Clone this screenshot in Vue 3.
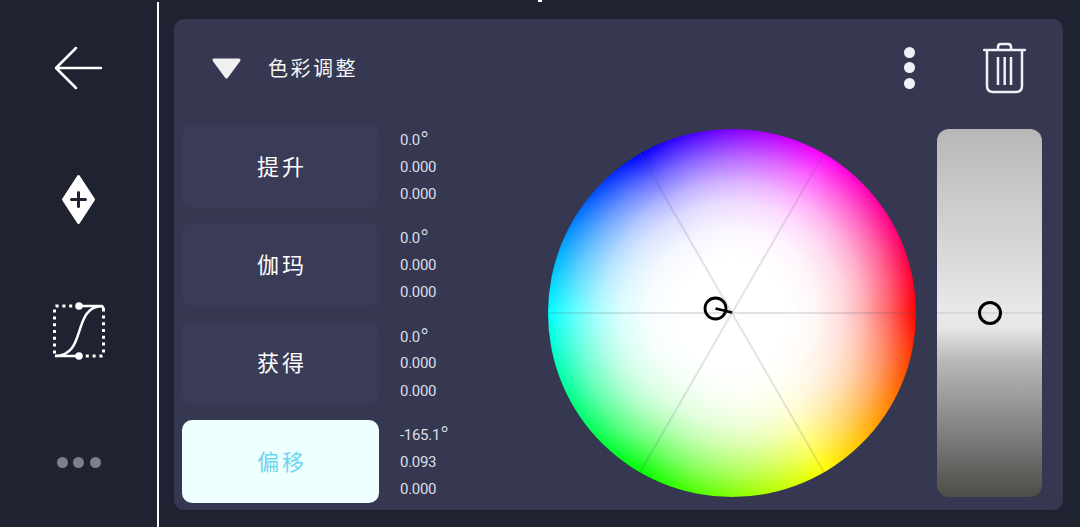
<template>
  <div class="page">
    <span class="notch"></span>

    <aside class="sidebar">
      <button class="side-btn" aria-label="Back">
        <svg width="50" height="44" viewBox="0 0 50 44">
          <path d="M22 2 L2 22 L22 42 M2 22 H47" fill="none" stroke="#fff" stroke-width="2.5" stroke-linecap="round" stroke-linejoin="round" />
        </svg>
      </button>
      <button class="side-btn" aria-label="Add keyframe">
        <svg width="35" height="51" viewBox="0 0 35 51">
          <path d="M17.5 2.5 L32.5 25.5 L17.5 48.5 L2.5 25.5 Z" fill="#fff" stroke="#fff" stroke-width="3" stroke-linejoin="round" />
          <path d="M10.5 25.5 H24.5 M17.5 18.5 V32.5" fill="none" stroke="#1f2230" stroke-width="3" stroke-linecap="round" />
        </svg>
      </button>
      <button class="side-btn" aria-label="Curve">
        <svg width="56" height="60" viewBox="0 0 56 60">
          <path d="M28 5 H5 Q3.500 5 3.500 6.500 V54 M28 55 H51 Q52.500 55 52.500 53.500 V6" fill="none" stroke="#fff" stroke-width="3" stroke-dasharray="3 3.800" />
          <path d="M5 55 H28 M28 5 H49 Q52.500 5 52.500 8" fill="none" stroke="#fff" stroke-width="2.500" stroke-linecap="round" />
          <path d="M4 55 C37 55 20 5 52 5" fill="none" stroke="#fff" stroke-width="2.500" />
          <circle cx="28" cy="5" r="3.800" fill="#fff" />
          <circle cx="28" cy="55" r="3.800" fill="#fff" />
        </svg>
      </button>
      <button class="side-btn more" aria-label="More">
        <span v-for="n in 3" :key="n"></span>
      </button>
    </aside>

    <main class="panel">
      <header class="panel-head">
        <svg class="caret" width="31" height="23" viewBox="0 0 31 23">
          <path d="M3 3 H28 L15.5 20 Z" fill="#f0f0f0" stroke="#f0f0f0" stroke-width="3" stroke-linejoin="round" />
        </svg>
        <h2>色彩调整</h2>
        <div class="kebab">
          <span v-for="n in 3" :key="n"></span>
        </div>
        <svg class="trash" width="43" height="52" viewBox="0 0 43 52">
          <path d="M1 8 H42" stroke="#f0f1f6" stroke-width="2.5" fill="none" stroke-linecap="round" />
          <path d="M15 7 V5 Q15 2 18 2 H25 Q28 2 28 5 V7" stroke="#f0f1f6" stroke-width="2.5" fill="none" />
          <path d="M4 8 V44 Q4 50 10 50 H33 Q39 50 39 44 V8" stroke="#f0f1f6" stroke-width="2.5" fill="none" />
          <path d="M15 15 V43 M21.700 15 V43 M28 15 V43" stroke="#f0f1f6" stroke-width="2.5" fill="none" />
        </svg>
      </header>

      <section class="panel-body">
        <div class="rows">
          <div v-for="row in rows" :key="row.name" class="row">
            <button class="row-btn" :class="{ active: row.active }">{{ row.name }}</button>
            <div class="values">
              <div>{{ row.angle }}<span class="deg">°</span></div>
              <div>{{ row.a }}</div>
              <div>{{ row.b }}</div>
            </div>
          </div>
        </div>

        <div class="wheel">
          <svg class="wheel-lines" width="368" height="368" viewBox="0 0 368 368">
            <g stroke="rgba(90,90,110,0.17)" stroke-width="2">
              <path d="M0 184 H368" />
              <path d="M92 24.7 L276 343.3" />
              <path d="M276 24.7 L92 343.3" />
            </g>
            <circle cx="167.500" cy="179.500" r="10.500" fill="none" stroke="#000" stroke-width="2.800" />
            <path d="M167.500 179.500 L184 183.500" stroke="#000" stroke-width="2.800" />
          </svg>
        </div>

        <div class="slider">
          <span class="slider-line"></span>
          <span class="slider-knob"></span>
        </div>
      </section>
    </main>
  </div>
</template>

<script setup>
const rows = [
  { name: '提升', angle: '0.0', a: '0.000', b: '0.000' },
  { name: '伽玛', angle: '0.0', a: '0.000', b: '0.000' },
  { name: '获得', angle: '0.0', a: '0.000', b: '0.000' },
  { name: '偏移', angle: '-165.1', a: '0.093', b: '0.000', active: true }
]
</script>

<style>
html,
body {
  margin: 0;
  background: #1f2230;
}
</style>

<style scoped>
.page {
  position: relative;
  display: flex;
  width: 1080px;
  height: 527px;
  overflow: hidden;
  background: #1f2230;
  font-family: "Noto Sans CJK SC", "Noto Sans", sans-serif;
}

.notch {
  position: absolute;
  top: 0;
  left: 538px;
  width: 4px;
  height: 2px;
  background: #fff;
}

.sidebar {
  box-sizing: border-box;
  flex: 0 0 159px;
  margin-top: 2px;
  border-right: 2px solid #fff;
  display: grid;
  grid-auto-rows: 131.67px;
  justify-items: center;
  align-items: center;
}

.side-btn {
  display: block;
  padding: 0;
  border: none;
  background: none;
  line-height: 0;
}

.more {
  display: flex;
  gap: 5.5px;
}
.more span {
  width: 11px;
  height: 11px;
  border-radius: 50%;
  background: #7d7f8d;
}

.panel {
  box-sizing: border-box;
  width: 889px;
  height: 491px;
  margin: 19px 0 0 15px;
  padding: 0 21px 0 8px;
  border-radius: 10px;
  background: #353850;
}

.panel-head {
  display: flex;
  align-items: center;
  height: 98px;
  margin-bottom: 8px;
  color: #f6f7fa;
}
.caret {
  margin-left: 29px;
}
.panel-head h2 {
  margin: 0 0 2px 26px;
  font-size: 20px;
  font-weight: 400;
  letter-spacing: 2.5px;
}
.kebab {
  margin: 0 0 1px auto;
  display: flex;
  flex-direction: column;
  gap: 4.5px;
}
.kebab span {
  width: 11px;
  height: 11px;
  border-radius: 50%;
  background: #f0f1f6;
}
.trash {
  margin: 0 16px 0 68px;
}

.panel-body {
  display: flex;
  align-items: flex-start;
  height: 377px;
}

.rows {
  flex: 0 0 366px;
  display: flex;
  flex-direction: column;
  gap: 15.67px;
}
.row {
  display: flex;
  align-items: center;
  gap: 21px;
  height: 82.67px;
}
.row-btn {
  width: 197px;
  height: 100%;
  padding: 0 0 3px 3px;
  border: none;
  border-radius: 10px;
  background: #393b57;
  color: #fff;
  font-family: inherit;
  font-size: 22px;
  font-weight: 400;
  letter-spacing: 3px;
}
.row-btn.active {
  background: #eeffff;
  color: #6fd6ee;
}
.values {
  padding-top: 2px;
  font-family: Roboto, sans-serif;
  font-size: 15px;
  font-weight: 400;
  letter-spacing: -0.3px;
  line-height: 27.5px;
  color: #dcdee8;
}
.values > div:first-child {
  position: relative;
  top: 1px;
}
.deg {
  position: relative;
  top: 4px;
  font-size: 24px;
  font-weight: 300;
  line-height: 0;
}

.wheel {
  position: relative;
  flex: 0 0 368px;
  height: 368px;
  margin-top: 4px;
  border-radius: 50%;
  background:
    radial-gradient(circle closest-side, #fff 0%, #fff 30%, rgba(255, 255, 255, 0.96) 46%, rgba(255, 255, 255, 0.86) 60%, rgba(255, 255, 255, 0.7) 71%, rgba(255, 255, 255, 0.4) 85%, rgba(255, 255, 255, 0) 100%),
    conic-gradient(from 90deg, #f00, #ff0, #0f0, #0ff, #00f, #f0f, #f00);
}
.wheel-lines {
  position: absolute;
  inset: 0;
}

.slider {
  position: relative;
  flex: 0 0 105px;
  height: 368px;
  margin: 4px 0 0 21px;
  border-radius: 12px;
  background: linear-gradient(180deg, #b7b7b7 0%, #e9e9eb 50%, #e6e6e6 54%, #b8b8b8 63%, #8a8a8a 79%, #4c4c48 100%);
}
.slider-line {
  position: absolute;
  left: 0;
  right: 0;
  top: 183px;
  height: 2px;
  background: rgba(120, 120, 120, 0.15);
}
.slider-knob {
  position: absolute;
  left: 40.5px;
  top: 172px;
  width: 18px;
  height: 18px;
  border: 3px solid #000;
  border-radius: 50%;
}
</style>
